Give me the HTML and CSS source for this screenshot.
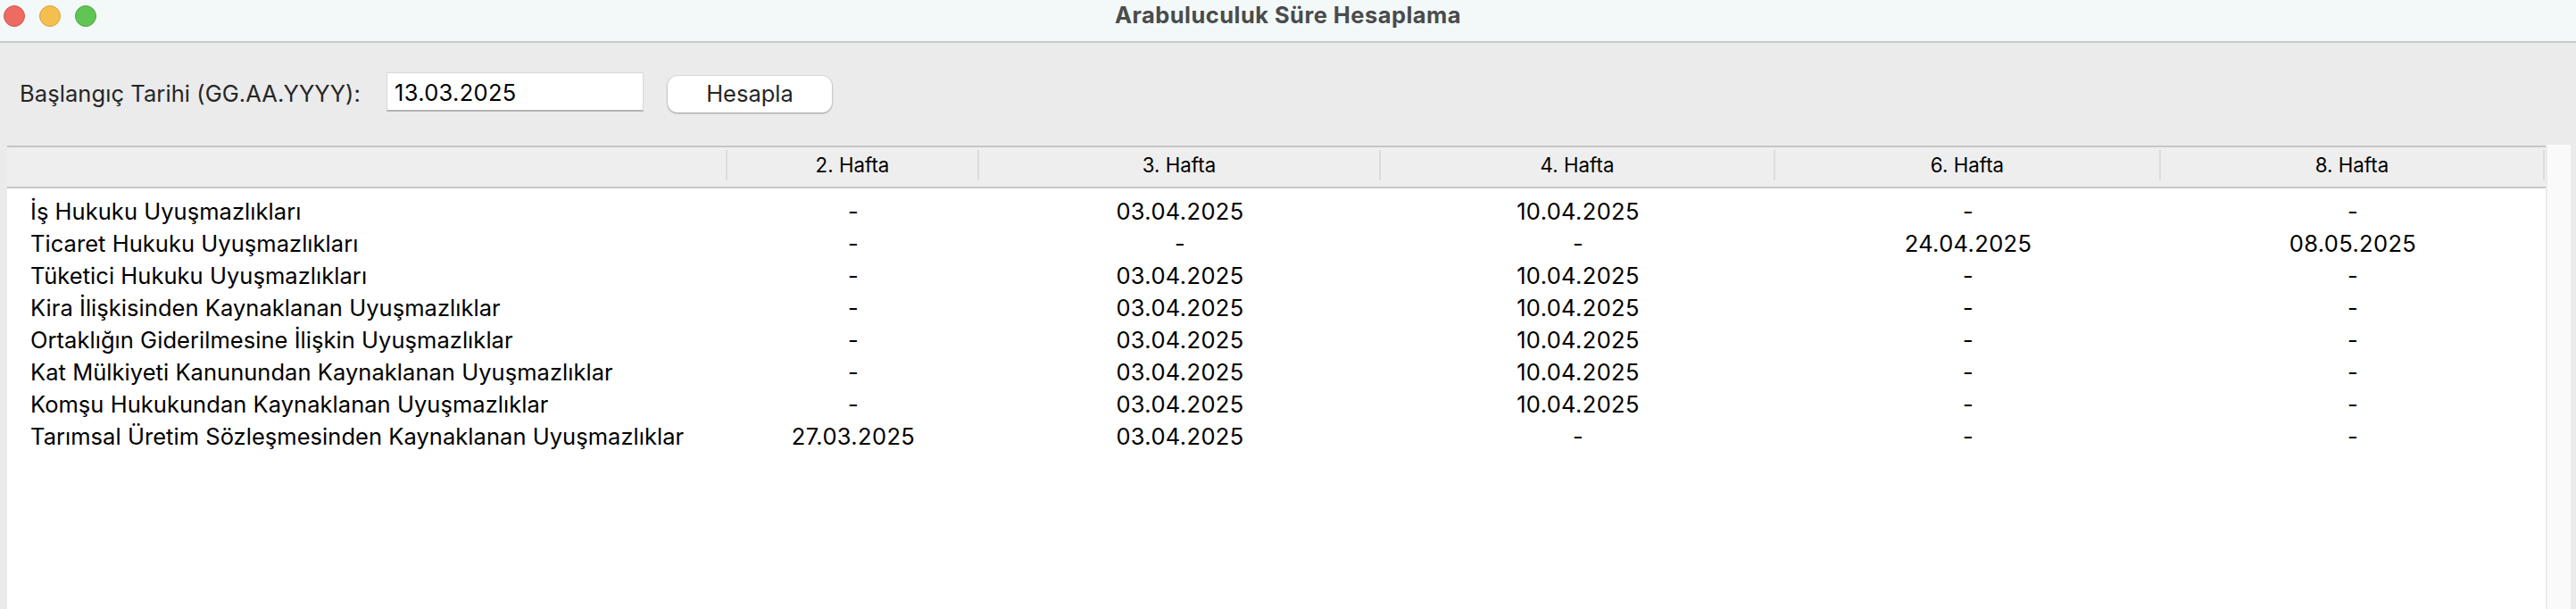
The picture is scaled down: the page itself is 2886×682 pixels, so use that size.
FILE: index.html
```html
<!DOCTYPE html>
<html lang="tr">
<head>
<meta charset="utf-8">
<title>Arabuluculuk Süre Hesaplama</title>
<link rel="stylesheet" href="styles.css">
</head>
<body>
<header class="titlebar">
  <div class="lights"><span class="light close"></span><span class="light minimize"></span><span class="light zoom"></span></div>
  <h1 class="title">Arabuluculuk Süre Hesaplama</h1>
  <div></div>
</header>
<form class="toolbar">
  <label class="label" for="start">Başlangıç Tarihi (GG.AA.YYYY):</label>
  <input class="field" id="start" type="text" value="13.03.2025">
  <button class="button" type="button">Hesapla</button>
</form>
<main class="content">
  <div class="table">
    <div class="row head"><span class="th"></span><span class="th">2. Hafta</span><span class="th">3. Hafta</span><span class="th">4. Hafta</span><span class="th">6. Hafta</span><span class="th">8. Hafta</span></div>
    <div class="body">
      <div class="row"><span class="name">İş Hukuku Uyuşmazlıkları</span><span>-</span><span>03.04.2025</span><span>10.04.2025</span><span>-</span><span>-</span></div>
      <div class="row"><span class="name">Ticaret Hukuku Uyuşmazlıkları</span><span>-</span><span>-</span><span>-</span><span>24.04.2025</span><span>08.05.2025</span></div>
      <div class="row"><span class="name">Tüketici Hukuku Uyuşmazlıkları</span><span>-</span><span>03.04.2025</span><span>10.04.2025</span><span>-</span><span>-</span></div>
      <div class="row"><span class="name">Kira İlişkisinden Kaynaklanan Uyuşmazlıklar</span><span>-</span><span>03.04.2025</span><span>10.04.2025</span><span>-</span><span>-</span></div>
      <div class="row"><span class="name">Ortaklığın Giderilmesine İlişkin Uyuşmazlıklar</span><span>-</span><span>03.04.2025</span><span>10.04.2025</span><span>-</span><span>-</span></div>
      <div class="row"><span class="name">Kat Mülkiyeti Kanunundan Kaynaklanan Uyuşmazlıklar</span><span>-</span><span>03.04.2025</span><span>10.04.2025</span><span>-</span><span>-</span></div>
      <div class="row"><span class="name">Komşu Hukukundan Kaynaklanan Uyuşmazlıklar</span><span>-</span><span>03.04.2025</span><span>10.04.2025</span><span>-</span><span>-</span></div>
      <div class="row"><span class="name">Tarımsal Üretim Sözleşmesinden Kaynaklanan Uyuşmazlıklar</span><span>27.03.2025</span><span>03.04.2025</span><span>-</span><span>-</span><span>-</span></div>
    </div>
  </div>
  <div class="scrollbar"></div>
</main>
</body>
</html>
```
FILE: styles.css
```css
* { box-sizing: border-box; }
body {
  margin: 0;
  height: 682px;
  overflow: hidden;
  display: flex;
  flex-direction: column;
  background: #ebebeb;
  color: #000;
  font-family: Inter, "Liberation Sans", sans-serif;
  font-size: 25.5px;
}
.titlebar {
  height: 48px;
  flex: none;
  display: grid;
  grid-template-columns: 1fr auto 1fr;
  background: #f3f9f9;
  border-bottom: 2px solid #c8c9ca;
}
.lights { display: flex; gap: 16px; padding: 6px 0 0 4px; }
.light { width: 24px; height: 24px; border-radius: 50%; border: 1px solid; }
.close { background: #ed6b60; border-color: #d65549; }
.minimize { background: #f5bf4f; border-color: #d8a13a; }
.zoom { background: #61c554; border-color: #4ba73e; }
.title {
  margin: 0;
  font-size: 25.5px;
  font-weight: 700;
  line-height: 34px;
  letter-spacing: .45px;
  color: #4a4c4c;
}
.toolbar {
  height: 115px;
  flex: none;
  display: flex;
  align-items: flex-start;
}
.label {
  width: 411px;
  padding-left: 22px;
  margin-top: 41px;
  line-height: 32px;
  letter-spacing: .07px;
  color: #262626;
  white-space: nowrap;
}
.field {
  width: 288px;
  height: 44px;
  margin-top: 33px;
  margin-left: 22px;
  padding: 1px 0 0 8px;
  border: 1px solid #d9d9d9;
  border-bottom: 2px solid #b4b4b4;
  background: #fff;
  font: inherit;
  letter-spacing: .3px;
  color: #000;
}
.button {
  width: 184px;
  height: 41px;
  margin: 37px 0 0 27px;
  padding: 0 0 2px;
  border: 0;
  border-radius: 11px;
  background: #fff;
  box-shadow: 0 0 1px 1px rgba(0, 0, 0, .08), 0 1px 2px rgba(0, 0, 0, .3);
  font: inherit;
  color: #262626;
}
.content { flex: 1; display: flex; margin: 0 6px 0 8px; }
.table { width: 2844px; background: #fff; }
.row {
  display: grid;
  grid-template-columns: 807px 282px 450px 442px 432px 430px;
  line-height: 36px;
  letter-spacing: .35px;
  text-align: center;
  white-space: nowrap;
}
.head {
  height: 48px;
  padding: 3px 0 7px;
  background: #eee;
  border-top: 2px solid #c6c6c6;
  border-bottom: 2px solid #c6c6c6;
  font-size: 22.3px;
  letter-spacing: 0;
}
.th { border-right: 2px solid #dcdcdc; line-height: 33px; }
.body { padding-top: 8px; }
.name { text-align: left; padding-left: 26px; letter-spacing: .04px; }
.scrollbar { flex: 1; margin-top: -1px; border-left: 2px solid #ebebeb; background: #fafafa; }
```
